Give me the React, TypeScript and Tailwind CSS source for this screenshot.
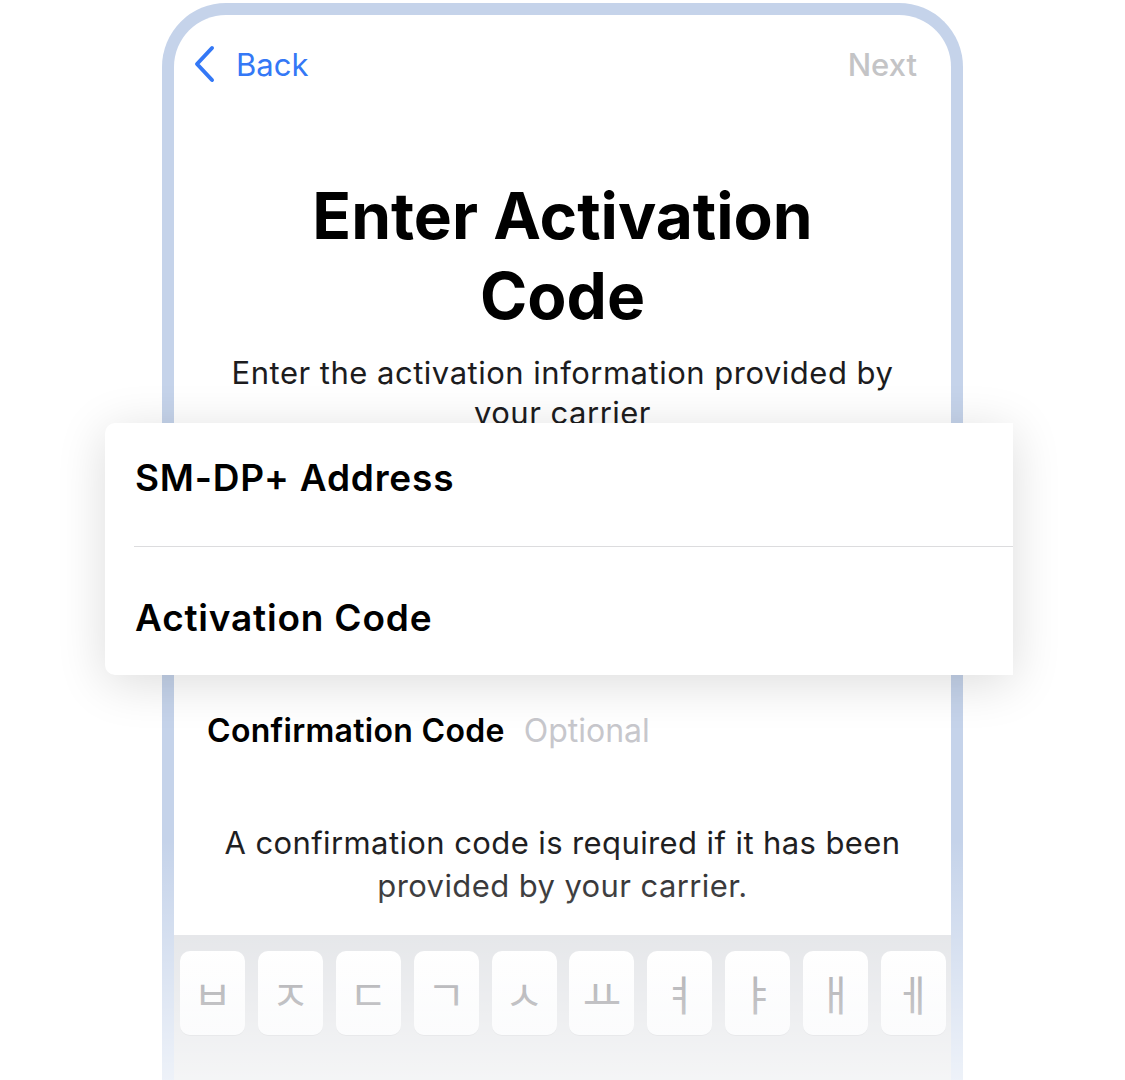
const keys = ["ㅂ", "ㅈ", "ㄷ", "ㄱ", "ㅅ", "ㅛ", "ㅕ", "ㅑ", "ㅐ", "ㅔ"];

function Key({ label }: { label: string }) {
  return (
    <div className="w-[65px] h-[84px] rounded-[10px] bg-gradient-to-b from-white to-[#f7f8fa] shadow-[0_1px_0_rgba(0,0,0,0.08)] flex items-center justify-center">
      <span className="text-[42px] leading-none font-normal text-[#8a8a8f] font-['Noto_Sans_CJK_KR',sans-serif]">{label}</span>
    </div>
  );
}

export default function App() {
  return (
    <div className="relative w-[1125px] h-[1080px] overflow-hidden bg-white font-['Inter',sans-serif]">
      <div className="pt-[3px] pl-[162px]">
        <div className="w-[801px] h-[1077px] rounded-t-[64px] border-[12px] border-b-0 border-[#c5d3ea] bg-white flex flex-col overflow-hidden">
          {/* nav */}
          <div className="mt-[30px] h-[38px] flex items-center justify-between pl-[19px] pr-[34px]">
            <div className="flex items-center text-[#3478f6]">
              <svg width="22" height="38" viewBox="0 0 22 38" fill="none">
                <path d="M19 3 L4 19 L19 35" stroke="#3478f6" strokeWidth="4" strokeLinecap="round" strokeLinejoin="round" />
              </svg>
              <span className="ml-[21px] text-[31px] leading-none">Back</span>
            </div>
            <span className="text-[31px] leading-none text-[#c4c4c6] font-medium">Next</span>
          </div>

          <h1 className="mt-[93px] text-center text-[64px] leading-[80px] font-bold text-black">
            Enter Activation
            <br />
            Code
          </h1>

          <p className="mt-[17px] text-center text-[31px] leading-[40px] tracking-[0.5px] text-[#1c1c1e]">
            Enter the activation information provided by
            <br />
            your carrier
          </p>

          <div className="h-[278px]" />

          <div className="h-[40px] flex items-center pl-[33px]">
            <span className="text-[32px] font-semibold tracking-[0.3px] text-black">Confirmation Code</span>
            <span className="ml-[19px] text-[32px] text-[#c7c7cc]">Optional</span>
          </div>

          <p className="mt-[70px] text-center text-[31px] leading-[43px] tracking-[0.4px] text-[#1c1c1e]">
            A confirmation code is required if it has been
            <br />
            provided by your carrier.
          </p>

          {/* keyboard */}
          <div className="mt-[28px] flex-1 bg-[#dcdee2] pt-[16px] pl-[6px] pr-[5px]">
            <div className="flex justify-between">
              {keys.map((k) => (
                <Key key={k} label={k} />
              ))}
            </div>
          </div>
        </div>
      </div>

      {/* fade over the bottom of the phone */}
      <div className="absolute left-0 right-0 top-[840px] bottom-0 bg-gradient-to-b from-white/0 to-white/70 pointer-events-none" />

      {/* enlarged field card */}
      <div className="absolute left-[105px] top-[423px] w-[908px] h-[252px] rounded-l-[10px] bg-white shadow-[0_8px_50px_rgba(0,0,0,0.14)]">
        <div className="h-[123px] pl-[30px] pt-[34px]">
          <span className="block text-[37px] leading-[42px] font-semibold tracking-[0.8px] text-black">SM-DP+ Address</span>
        </div>
        <div className="ml-[29px] border-t border-[#dcdcde]" />
        <div className="pl-[30px] pt-[50px]">
          <span className="block text-[37px] leading-[42px] font-semibold tracking-[0.8px] text-black">Activation Code</span>
        </div>
      </div>
    </div>
  );
}
